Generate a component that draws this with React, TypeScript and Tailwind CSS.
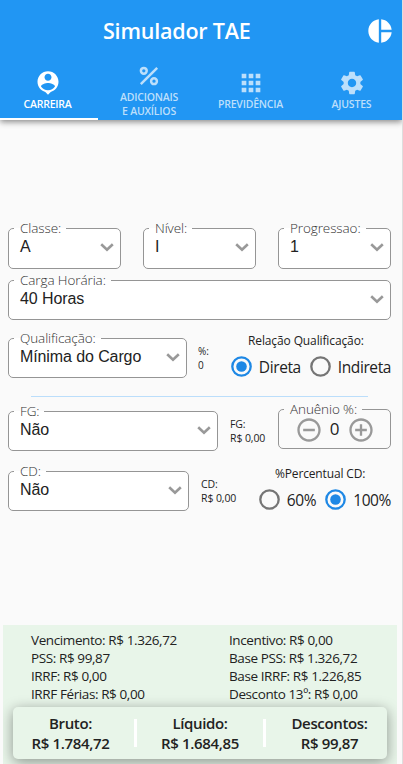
import type { ReactNode } from 'react';
import { MdAddCircleOutline, MdApps, MdPieChart, MdRemoveCircleOutline, MdSettings } from 'react-icons/md';

function PersonPin() {
  return (
    <svg viewBox="0 0 24 24" width="28" height="28" fill="currentColor">
      <path d="M12 2c-4.97 0-9 4.03-9 9 0 4.17 2.84 7.67 6.69 8.69L12 22l2.31-2.31C18.16 18.67 21 15.17 21 11c0-4.97-4.03-9-9-9zm0 2c1.66 0 3 1.34 3 3s-1.34 3-3 3-3-1.34-3-3 1.34-3 3-3zm0 14.3c-2.5 0-4.71-1.28-6-3.22.03-1.99 4-3.08 6-3.08 1.99 0 5.97 1.09 6 3.08-1.29 1.94-3.5 3.22-6 3.22z" />
    </svg>
  );
}

function Percent() {
  return (
    <svg viewBox="0 0 28 28" width="28" height="28" fill="none" stroke="currentColor" strokeWidth="2.5">
      <circle cx="8.8" cy="8.8" r="2.9" />
      <circle cx="19" cy="19.2" r="2.9" />
      <path d="M5.8 22.2 22.2 5.8" />
    </svg>
  );
}

function Chevron() {
  return (
    <svg viewBox="0 0 26 26" width="26" height="26" fill="none" stroke="#999" strokeWidth="2.6">
      <path d="m7.2 10.2 5.8 5.6 5.8-5.6" />
    </svg>
  );
}

function Tab({ icon, width, active, children }: { icon: ReactNode; width: string; active?: boolean; children: ReactNode }) {
  return (
    <button
      className={`flex flex-col items-center justify-center border-b-2 text-[10.5px] leading-[13.5px] font-semibold ${width} ${
        active ? 'border-white pr-[3px] text-white' : 'border-transparent text-[#bcdffb]'
      }`}
    >
      {icon}
      <span className="mt-px tracking-[-0.2px]">{children}</span>
    </button>
  );
}

function Field({ label, className, children }: { label: string; className: string; children: ReactNode }) {
  return (
    <fieldset className={`shrink-0 rounded-[5px] border border-[#959595] pl-[5px] ${className}`}>
      <legend className="h-[15px] pr-[5px] pl-[6px] text-[13.5px] leading-[15px] font-light tracking-[-0.1px] text-[#333]">
        {label}
      </legend>
      {children}
    </fieldset>
  );
}

function Select({ label, value, className }: { label: string; value: string; className: string }) {
  return (
    <Field label={label} className={`bg-white ${className}`}>
      <div className="-mt-[2px] flex h-[25px] items-center justify-between pl-[6px]">
        <span className="font-['Liberation_Sans',Arial,sans-serif] text-[16px] tracking-[-0.1px] text-[#222]">{value}</span>
        <Chevron />
      </div>
    </Field>
  );
}

function Radio({ label, checked }: { label: string; checked?: boolean }) {
  return (
    <label className="flex items-center gap-[5px] text-[15.5px] leading-[24px] tracking-[-0.4px]">
      <svg viewBox="0 0 25 25" width="25" height="25" className={checked ? 'text-[#1e88e5]' : 'text-[#757575]'}>
        <circle cx="12.5" cy="12.5" r="9.2" fill="none" stroke="currentColor" strokeWidth="2.3" />
        {checked && <circle cx="12.5" cy="12.5" r="5.3" fill="currentColor" />}
      </svg>
      <span>{label}</span>
    </label>
  );
}

function Total({ label, value }: { label: string; value: string }) {
  return (
    <div className="flex w-[115px] flex-col items-center text-[15px] leading-[20px] font-semibold tracking-[-0.35px]">
      <span>{label}</span>
      <span>{value}</span>
    </div>
  );
}

const leftDetails = ['Vencimento: R$ 1.326,72', 'PSS: R$ 99,87', 'IRRF: R$ 0,00', 'IRRF Férias: R$ 0,00'];
const rightDetails = ['Incentivo: R$ 0,00', 'Base PSS: R$ 1.326,72', 'Base IRRF: R$ 1.226,85', 'Desconto 13º: R$ 0,00'];

export default function App() {
  return (
    <div className="flex h-[764px] w-[403px] flex-col overflow-hidden border-r border-[#dedede] bg-[#fafafa] font-['Open_Sans','Noto_Sans',sans-serif] text-[#222]">
      <header className="flex h-[120px] shrink-0 flex-col bg-[#2196f3] text-white shadow-[0_2px_6px_rgba(0,0,0,0.45)]">
        <div className="flex h-[62px] items-center pr-[8px] pl-[103px]">
          <h1 className="grow text-[21.5px] font-semibold tracking-[-0.2px] whitespace-nowrap">Simulador TAE</h1>
          <MdPieChart className="size-[28px]" />
        </div>
        <nav className="flex h-[58px]">
          <Tab width="w-[98px]" active icon={<PersonPin />}>CARREIRA</Tab>
          <Tab width="w-[102px]" icon={<Percent />}>
            ADICIONAIS
            <br />E AUXÍLIOS
          </Tab>
          <Tab width="w-[101px]" icon={<MdApps className="size-[28px]" />}>PREVIDÊNCIA</Tab>
          <Tab width="w-[101px]" icon={<MdSettings className="size-[28px]" />}>AJUSTES</Tab>
        </nav>
      </header>

      <main className="flex grow flex-col pt-[101px] pr-[11px] pl-[8px]">
        <div className="flex gap-[22px]">
          <Select label="Classe:" value="A" className="h-[48px] w-[113px]" />
          <Select label="Nível:" value="I" className="h-[48px] w-[113px]" />
          <Select label="Progressao:" value="1" className="h-[48px] w-[113px]" />
        </div>
        <Select label="Carga Horária:" value="40 Horas" className="mt-[4px] h-[47px] w-[383px]" />

        <div className="mt-[11px] flex h-[48px]">
          <Select label="Qualificação:" value="Mínima do Cargo" className="h-[47px] w-[179px]" />
          <div className="mt-[13px] ml-[11px] w-[29px] text-[10px] leading-[14px]">
            %:
            <br />0
          </div>
          <div className="flex grow flex-col">
            <span className="ml-[21px] text-[12px] leading-[20px] tracking-[-0.12px] whitespace-nowrap">Relação Qualificação:</span>
            <div className="mt-[3px] flex justify-end gap-[7px] whitespace-nowrap">
              <Radio label="Direta" checked />
              <Radio label="Indireta" />
            </div>
          </div>
        </div>

        <hr className="mt-[17px] ml-[23px] w-[337px] border-[#bbdefb]" />

        <div className="mt-[5px] flex h-[52px]">
          <Select label="FG:" value="Não" className="mt-[2px] h-[47px] w-[210px]" />
          <div className="mt-[15px] ml-[12px] w-[48px] text-[10.5px] leading-[14px] tracking-[-0.1px] whitespace-nowrap">
            FG:
            <br />
            R$ 0,00
          </div>
          <Field label="Anuênio %:" className="h-[47px] w-[113px]">
            <div className="-mt-px flex h-[28px] items-center justify-center gap-[6px] pr-[5px] text-[#999]">
              <MdRemoveCircleOutline className="size-[28px]" />
              <span className="mb-[2px] w-[12px] text-center text-[17px] leading-[18px] text-[#222]">0</span>
              <MdAddCircleOutline className="size-[28px]" />
            </div>
          </Field>
        </div>

        <div className="mt-[10px] flex">
          <Select label="CD:" value="Não" className="h-[47px] w-[181px]" />
          <div className="mt-[13px] ml-[12px] w-[46px] text-[10.5px] leading-[14px] tracking-[-0.1px] whitespace-nowrap">
            CD:
            <br />
            R$ 0,00
          </div>
          <div className="flex grow flex-col">
            <span className="ml-[28px] text-[12px] leading-[20px] tracking-[-0.15px]">%Percentual CD:</span>
            <div className="mt-[3px] flex justify-end gap-[7px] whitespace-nowrap">
              <Radio label="60%" />
              <Radio label="100%" checked />
            </div>
          </div>
        </div>
      </main>

      <footer className="ml-[3px] h-[139px] w-[394px] shrink-0 overflow-hidden bg-[#e8f5e9] pt-[6px]">
        <div className="flex pl-[28px] text-[13.5px] leading-[18px] tracking-[-0.4px]">
          <div className="w-[198px]">
            {leftDetails.map((line) => (
              <p key={line}>{line}</p>
            ))}
          </div>
          <div>
            {rightDetails.map((line) => (
              <p key={line}>{line}</p>
            ))}
          </div>
        </div>
        <div className="mt-[4px] ml-[10px] flex h-[52px] w-[374px] items-center justify-between rounded-[5px] bg-[#e8f5e9] shadow-[0_3px_14px_rgba(0,0,0,0.4)]">
          <Total label="Bruto:" value="R$ 1.784,72" />
          <div className="h-[28px] w-[3px] bg-white" />
          <Total label="Líquido:" value="R$ 1.684,85" />
          <div className="h-[28px] w-[3px] bg-white" />
          <Total label="Descontos:" value="R$ 99,87" />
        </div>
      </footer>
    </div>
  );
}
